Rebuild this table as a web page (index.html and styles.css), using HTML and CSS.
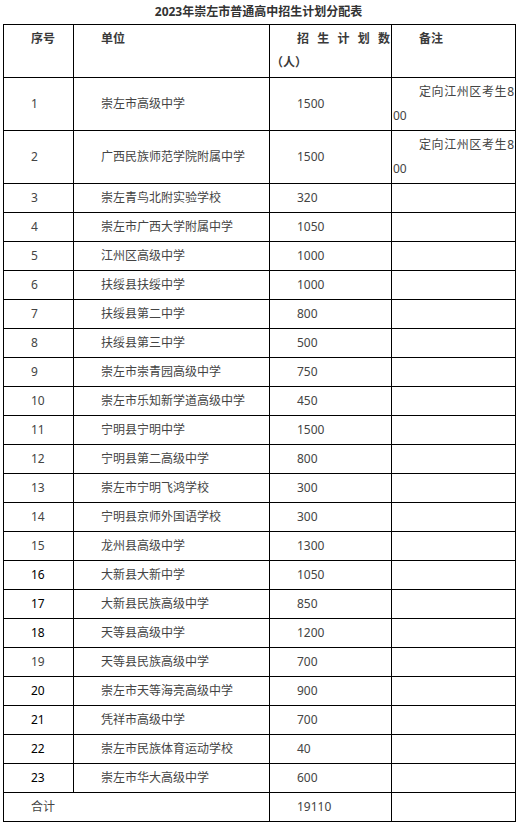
FILE: index.html
```html
<!DOCTYPE html>
<html lang="zh-CN">
<head>
<meta charset="utf-8">
<title>2023年崇左市普通高中招生计划分配表</title>
<link rel="stylesheet" href="styles.css">
</head>
<body>
<div class="page">
  <h1 class="title">2023年崇左市普通高中招生计划分配表</h1>
  <table class="plan">
    <colgroup>
      <col class="c-no">
      <col class="c-unit">
      <col class="c-num">
      <col class="c-note">
    </colgroup>
    <thead>
      <tr><th>序号</th><th>单位</th><th>招生计划数（人）</th><th>备注</th></tr>
    </thead>
    <tbody>
      <tr class="tall"><td>1</td><td>崇左市高级中学</td><td>1500</td><td class="note">定向江州区考生800</td></tr>
      <tr class="tall"><td>2</td><td>广西民族师范学院附属中学</td><td>1500</td><td class="note">定向江州区考生800</td></tr>
      <tr><td>3</td><td>崇左青鸟北附实验学校</td><td>320</td><td></td></tr>
      <tr><td>4</td><td>崇左市广西大学附属中学</td><td>1050</td><td></td></tr>
      <tr><td>5</td><td>江州区高级中学</td><td>1000</td><td></td></tr>
      <tr><td>6</td><td>扶绥县扶绥中学</td><td>1000</td><td></td></tr>
      <tr><td>7</td><td>扶绥县第二中学</td><td>800</td><td></td></tr>
      <tr><td>8</td><td>扶绥县第三中学</td><td>500</td><td></td></tr>
      <tr><td>9</td><td>崇左市崇青园高级中学</td><td>750</td><td></td></tr>
      <tr><td>10</td><td>崇左市乐知新学道高级中学</td><td>450</td><td></td></tr>
      <tr><td>11</td><td>宁明县宁明中学</td><td>1500</td><td></td></tr>
      <tr><td>12</td><td>宁明县第二高级中学</td><td>800</td><td></td></tr>
      <tr><td>13</td><td>崇左市宁明飞鸿学校</td><td>300</td><td></td></tr>
      <tr><td>14</td><td>宁明县京师外国语学校</td><td>300</td><td></td></tr>
      <tr><td>15</td><td>龙州县高级中学</td><td>1300</td><td></td></tr>
      <tr><td class="dark">16</td><td>大新县大新中学</td><td>1050</td><td></td></tr>
      <tr><td class="dark">17</td><td>大新县民族高级中学</td><td>850</td><td></td></tr>
      <tr><td class="dark">18</td><td>天等县高级中学</td><td>1200</td><td></td></tr>
      <tr><td>19</td><td>天等县民族高级中学</td><td>700</td><td></td></tr>
      <tr><td class="dark">20</td><td>崇左市天等海亮高级中学</td><td>900</td><td></td></tr>
      <tr><td class="dark">21</td><td>凭祥市高级中学</td><td>700</td><td></td></tr>
      <tr><td class="dark">22</td><td>崇左市民族体育运动学校</td><td>40</td><td></td></tr>
      <tr><td class="dark">23</td><td>崇左市华大高级中学</td><td>600</td><td></td></tr>
      <tr><td colspan="2">合计</td><td>19110</td><td></td></tr>
    </tbody>
  </table>
</div>
</body>
</html>
```
FILE: styles.css
```css
html, body {
  margin: 0;
  padding: 0;
  background: #fff;
}

body {
  font-family: "Noto Sans", "Noto Sans CJK SC", sans-serif;
  font-size: 12px;
  color: #444;
}

.page {
  padding: 0 3px;
}

.title {
  margin: 0;
  height: 24px;
  font-size: 12px;
  line-height: 24px;
  font-weight: bold;
  text-align: center;
  color: #333;
}

.plan {
  border-collapse: collapse;
  table-layout: fixed;
  width: 512px;
  text-spacing-trim: space-all;
}

.c-no { width: 70px; }
.c-unit { width: 196px; }
.c-num { width: 122px; }
.c-note { width: 124px; }

.plan th,
.plan td {
  border: 1px solid #000;
  padding: 2px 1px;
  line-height: 24px;
  text-indent: 26px;
  text-align: justify;
  word-break: break-all;
  vertical-align: middle;
  font-size: 12px;
  text-spacing-trim: space-all;
}

.plan th {
  vertical-align: top;
  font-weight: bold;
  color: #3a3a3a;
  height: 48px;
}

.plan td {
  height: 24px;
  font-weight: normal;
}

.plan tr.tall td {
  height: 48px;
}

.plan td.note {
  vertical-align: top;
}

.plan td.dark {
  color: #000;
}
```
